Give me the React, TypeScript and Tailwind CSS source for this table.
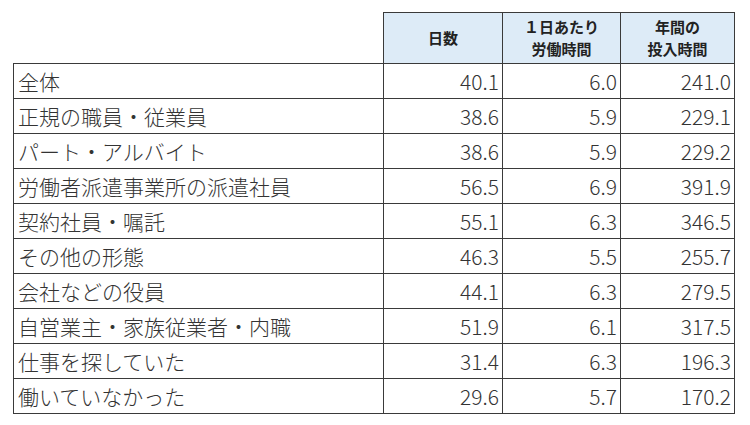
import React from "react";

const rows: [string, string, string, string][] = [
  ["全体", "40.1", "6.0", "241.0"],
  ["正規の職員・従業員", "38.6", "5.9", "229.1"],
  ["パート・アルバイト", "38.6", "5.9", "229.2"],
  ["労働者派遣事業所の派遣社員", "56.5", "6.9", "391.9"],
  ["契約社員・嘱託", "55.1", "6.3", "346.5"],
  ["その他の形態", "46.3", "5.5", "255.7"],
  ["会社などの役員", "44.1", "6.3", "279.5"],
  ["自営業主・家族従業者・内職", "51.9", "6.1", "317.5"],
  ["仕事を探していた", "31.4", "6.3", "196.3"],
  ["働いていなかった", "29.6", "5.7", "170.2"],
];

export default function App() {
  return (
    <div
      className="w-[750px] h-[425px] bg-white pl-[13px] pt-[12px]"
      style={{ fontFamily: '"Noto Sans CJK JP", "Noto Sans", sans-serif' }}
    >
      <table className="border-collapse table-fixed w-[721px]">
        <colgroup>
          <col className="w-[370px]" />
          <col className="w-[119px]" />
          <col className="w-[118px]" />
          <col className="w-[114px]" />
        </colgroup>
        <thead>
          <tr className="h-[51px]">
            <th className="p-0"></th>
            <th className="p-0 border border-[#3a3a3a] bg-[#ddebf7] text-[15px] font-bold text-[#222] leading-[22px]">
              日数
            </th>
            <th className="p-0 border border-[#3a3a3a] bg-[#ddebf7] text-[15px] font-bold text-[#222] leading-[22px]">
              <div>１日あたり</div>
              <div>労働時間</div>
            </th>
            <th className="p-0 border border-[#3a3a3a] bg-[#ddebf7] text-[15px] font-bold text-[#222] leading-[22px]">
              <div>年間の</div>
              <div>投入時間</div>
            </th>
          </tr>
        </thead>
        <tbody>
          {rows.map((r) => (
            <tr key={r[0]} className="h-[35px]">
              <td className="p-0 pl-[4px] border border-[#3a3a3a] text-[21px] font-light leading-[33px] text-[#333] whitespace-nowrap">
                {r[0]}
              </td>
              <td className="p-0 pr-[3px] border border-[#3a3a3a] text-right text-[21px] font-light leading-[33px] text-[#333]">
                {r[1]}
              </td>
              <td className="p-0 pr-[3px] border border-[#3a3a3a] text-right text-[21px] font-light leading-[33px] text-[#333]">
                {r[2]}
              </td>
              <td className="p-0 pr-[3px] border border-[#3a3a3a] text-right text-[21px] font-light leading-[33px] text-[#333]">
                {r[3]}
              </td>
            </tr>
          ))}
        </tbody>
      </table>
    </div>
  );
}
